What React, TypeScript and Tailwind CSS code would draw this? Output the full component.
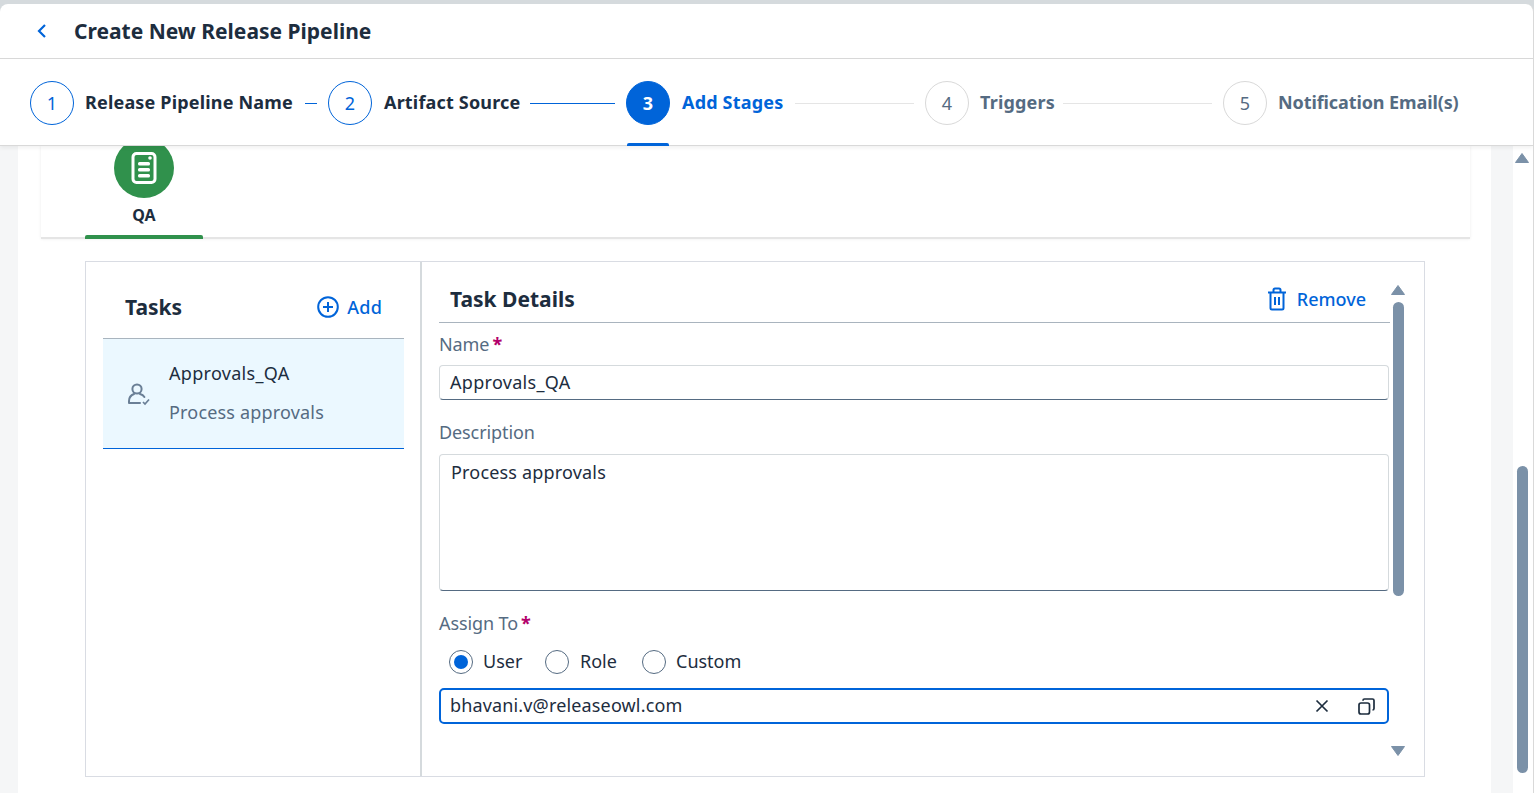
import React from "react";

const font = { fontFamily: '"Noto Sans", "Open Sans", sans-serif' };

function Step({ n, label, state, line, labelClass }: { n: number; label: string; state: "done" | "active" | "todo"; line?: number; labelClass: string }) {
  const circle =
    state === "active"
      ? "bg-[#0064d9] border-[#0064d9] text-white font-bold"
      : state === "done"
      ? "bg-white border-[#0064d9] text-[#0064d9]"
      : "bg-white border-[#d9d9d9] text-[#556b82]";
  const text = state === "active" ? "text-[#0064d9]" : state === "done" ? "text-[#1d2d3e]" : "text-[#556b82]";
  return (
    <>
      <div className="relative shrink-0">
        <div className={`w-11 h-11 rounded-full border flex items-center justify-center text-[18px] ${circle}`}>{n}</div>
        {state === "active" && <div className="absolute left-px right-px top-[62px] h-[3px] rounded-t-[2px] bg-[#0064d9]" />}
      </div>
      <div className={`ml-[11px] mb-[2px] text-[18px] leading-6 font-bold whitespace-nowrap ${labelClass} ${text}`}>{label}</div>
      {line ? (
        <div
          className={`ml-[11px] mr-[11px] h-px shrink-0 ${state === "todo" || state === "active" ? "bg-[#e5e5e5]" : "bg-[#0064d9]"}`}
          style={{ width: line }}
        />
      ) : null}
    </>
  );
}

function Radio({ label, checked, labelClass }: { label: string; checked?: boolean; labelClass: string }) {
  return (
    <div className="flex items-center gap-[10px]">
      <div className="w-6 h-6 rounded-full border border-[#556b82] bg-white flex items-center justify-center">
        {checked && <div className="w-[14px] h-[14px] rounded-full bg-[#0064d9]" />}
      </div>
      <span className={`text-[18px] leading-6 mb-[1px] text-[#1d2d3e] tracking-normal ${labelClass}`}>{label}</span>
    </div>
  );
}

function Arrow({ up, className }: { up?: boolean; className?: string }) {
  return (
    <svg width="14" height="10" viewBox="0 0 14 10" className={className}>
      <path d={up ? "M7 0.5 L13.5 9.5 H0.5 Z" : "M7 9.5 L13.5 0.5 H0.5 Z"} fill="#7b91a8" stroke="#7b91a8" strokeLinejoin="round" />
    </svg>
  );
}

export default function App() {
  return (
    <div style={font} className="h-[793px] w-[1534px] overflow-hidden bg-[#d5dadd] pt-1 flex flex-col tracking-[0.18px]">
      <div className="flex-1 min-h-0 flex flex-col rounded-t-lg bg-white border-r border-[#d9d9d9] overflow-hidden">
        {/* Title */}
        <div className="h-[55px] shrink-0 flex items-center border-b border-[#d9d9d9] pl-[35px]">
          <svg width="14" height="16" viewBox="0 0 14 16" fill="none">
            <path d="M10 2 L4 8 L10 14" stroke="#0064d9" strokeWidth="2.2" />
          </svg>
          <h1 className="ml-[25px] text-[21px] leading-7 font-bold tracking-normal text-[#1d2d3e]">Create New Release Pipeline</h1>
        </div>
        {/* Stepper */}
        <div className="relative z-10 h-[87px] shrink-0 flex items-center pl-[30px] pt-[2px] bg-white border-b border-[#d9d9d9] shadow-[0_2px_4px_rgba(0,0,0,0.06)]">
          <Step n={1} label="Release Pipeline Name" state="done" line={12} labelClass="w-[209px]" />
          <Step n={2} label="Artifact Source" state="done" line={85} labelClass="w-[136px] pl-px" />
          <Step n={3} label="Add Stages" state="active" line={119} labelClass="w-[103px] pl-px" />
          <Step n={4} label="Triggers" state="todo" line={149} labelClass="w-[72px]" />
          <Step n={5} label="Notification Email(s)" state="todo" labelClass="w-[184px] tracking-[-0.1px]" />
        </div>
        {/* Body */}
        <div className="flex-1 min-h-0 flex">
          <div className="w-[18px] shrink-0 bg-[#f5f6f7]" />
          <div className="w-[1473px] shrink-0 bg-white pl-[23px] pr-[21px]">
            <div className="relative h-[93px] border-b-2 border-[#e5e5e5] shadow-[0_0_3px_rgba(0,0,0,0.08)] bg-white">
              <div className="absolute left-[44px] bottom-[-2px] w-[118px] h-[4px] rounded-t-[2px] bg-[#30914c]" />
              <div className="absolute left-[44px] w-[118px] top-[-8px] flex flex-col items-center">
                <div className="w-[60px] h-[60px] rounded-full bg-[#30914c] flex items-center justify-center">
                  <svg width="26" height="32" viewBox="0 0 26 32" fill="none">
                    <rect x="2" y="1.500" width="22" height="29" rx="3.500" stroke="white" strokeWidth="3" />
                    <circle cx="19" cy="6" r="1.800" fill="white" />
                    <rect x="7" y="10" width="12" height="3.400" rx="1.500" fill="white" />
                    <rect x="7" y="16" width="12" height="3.400" rx="1.500" fill="white" />
                    <rect x="7" y="22" width="12" height="3.400" rx="1.500" fill="white" />
                  </svg>
                </div>
                <div className="mt-[7px] text-[16px] leading-5 font-bold tracking-normal text-[#1d2d3e]">QA</div>
              </div>
            </div>
            <div className="mt-[22px] ml-[44px] w-[1340px] h-[516px] flex border border-[#d9dce3]">
              {/* Tasks */}
              <div className="w-[336px] shrink-0 border-r-2 border-[#d5dadd] pl-[17px] pr-4">
                <div className="h-[77px] flex items-center justify-between border-b border-[#a9b4be] pl-[22px] pr-[22px] pt-[13px]">
                  <span className="text-[21px] leading-7 font-bold tracking-normal text-[#1d2d3e]">Tasks</span>
                  <span className="flex items-center gap-[8px] text-[18px] leading-6 font-medium text-[#0064d9]">
                    <svg width="22" height="22" viewBox="0 0 22 22" fill="none">
                      <circle cx="11" cy="11" r="9.800" stroke="#0064d9" strokeWidth="2" />
                      <path d="M11 6v10M6 11h10" stroke="#0064d9" strokeWidth="2" />
                    </svg>
                    Add
                  </span>
                </div>
                <div className="h-[110px] flex items-center bg-[#ebf8ff] border-b border-[#0064d9] pl-[24px]">
                  <svg width="24" height="24" viewBox="0 0 24 24" fill="none" stroke="#6a7f96" strokeWidth="2">
                    <circle cx="10" cy="7" r="4.600" />
                    <path d="M2 21 v-2 c0-4 2.500-6 5-7 M13 12 c2 .6 3.500 1.600 4.400 3 M2 21 h11" strokeLinecap="round" />
                    <path d="M16 20 l2 2 l4-4.500" strokeWidth="1.700" />
                  </svg>
                  <div className="ml-[18px] mb-[2px]">
                    <div className="text-[18px] leading-6 tracking-[0.3px] text-[#1d2d3e]">Approvals_QA</div>
                    <div className="mt-[15px] text-[18px] leading-6 text-[#556b82]">Process approvals</div>
                  </div>
                </div>
              </div>
              {/* Details */}
              <div className="relative flex-1 min-w-0 pl-[17px]">
                <div className="w-[951px]">
                  <div className="h-[61px] flex items-center justify-between border-b border-[#a9b4be] pl-[11px] pr-6 pt-[14px]">
                    <span className="text-[21px] leading-7 font-bold tracking-normal text-[#1d2d3e]">Task Details</span>
                    <span className="flex items-center gap-[10px] text-[18px] leading-6 font-medium tracking-normal text-[#0064d9]">
                      <svg width="20" height="24" viewBox="0 0 20 24" fill="none" stroke="#0064d9" strokeWidth="2">
                        <path d="M1 5.500h18M3.500 5.500V21a1.500 1.500 0 0 0 1.500 1.500h10a1.500 1.500 0 0 0 1.500-1.500V5.500M6.500 5.500V3a1.500 1.500 0 0 1 1.500-1.500h4A1.500 1.500 0 0 1 13.500 3v2.500M8 10v8M12 10v8" />
                      </svg>
                      Remove
                    </span>
                  </div>
                  <div className="mr-px">
                    <div className="mt-[9px] text-[18px] leading-6 tracking-[-0.1px] text-[#556b82]">
                      Name<span className="ml-[3px] font-bold text-[#b3006b]">*</span>
                    </div>
                    <div className="mt-[9px] h-[35px] rounded-[4px] border border-[#d5dadd] border-b-[#556b82] flex items-center pl-[10px] text-[18px] tracking-[0.3px] text-[#1d2d3e]">
                      Approvals_QA
                    </div>
                    <div className="mt-[20px] text-[18px] leading-6 tracking-[-0.1px] text-[#556b82]">Description</div>
                    <div className="mt-[10px] h-[137px] rounded-[4px] border border-[#d5dadd] border-b-[#556b82] pl-[11px] pt-[5px] text-[18px] leading-6 text-[#1d2d3e]">
                      Process approvals
                    </div>
                    <div className="mt-[20px] text-[18px] leading-6 tracking-[-0.1px] text-[#556b82]">
                      Assign To<span className="ml-[3px] font-bold text-[#b3006b]">*</span>
                    </div>
                    <div className="mt-[14px] ml-[10px] flex gap-[23px]">
                      <Radio label="User" checked labelClass="w-[39px]" />
                      <Radio label="Role" labelClass="w-[40px] pl-px" />
                      <Radio label="Custom" labelClass="w-[66px]" />
                    </div>
                    <div className="mt-[14px] h-[36px] rounded-[5px] border-2 border-[#0064d9] flex items-center justify-between pl-[9px] pr-[12px] text-[18px] text-[#1d2d3e]">
                      <span className="mb-[2px] tracking-[0.15px]">bhavani.v@releaseowl.com</span>
                      <span className="flex items-center gap-[29px]">
                        <svg width="14" height="14" viewBox="0 0 14 14" fill="none" stroke="#1d2d3e" strokeWidth="1.700">
                          <path d="M1.500 1.500l11 11M12.500 1.500l-11 11" />
                        </svg>
                        <svg width="17" height="17" viewBox="0 0 17 17" fill="none" stroke="#1d2d3e" strokeWidth="1.700">
                          <rect x="1" y="5" width="10.500" height="11" rx="2" />
                          <path d="M5 2.800V2.500A1.500 1.500 0 0 1 6.500 1H14.500A1.500 1.500 0 0 1 16 2.500V10.500A1.500 1.500 0 0 1 14.500 12" />
                        </svg>
                      </span>
                    </div>
                  </div>
                </div>
                {/* inner scrollbar overlay */}
                <div className="absolute left-[969px] top-[23px] bottom-[20px] w-[14px] flex flex-col items-center">
                  <Arrow up />
                  <div className="mt-[7px] h-[294px] w-[11px] rounded-full bg-[#7b91a8]" />
                  <Arrow className="mt-auto" />
                </div>
              </div>
            </div>
          </div>
          <div className="w-[22px] shrink-0 bg-[#f5f6f7]" />
          {/* Page scrollbar */}
          <div className="flex-1 flex flex-col items-center pt-[7px] pr-[2px]">
            <Arrow up />
            <div className="mt-[303px] h-[307px] w-[11px] rounded-full bg-[#7b91a8]" />
          </div>
        </div>
      </div>
    </div>
  );
}
